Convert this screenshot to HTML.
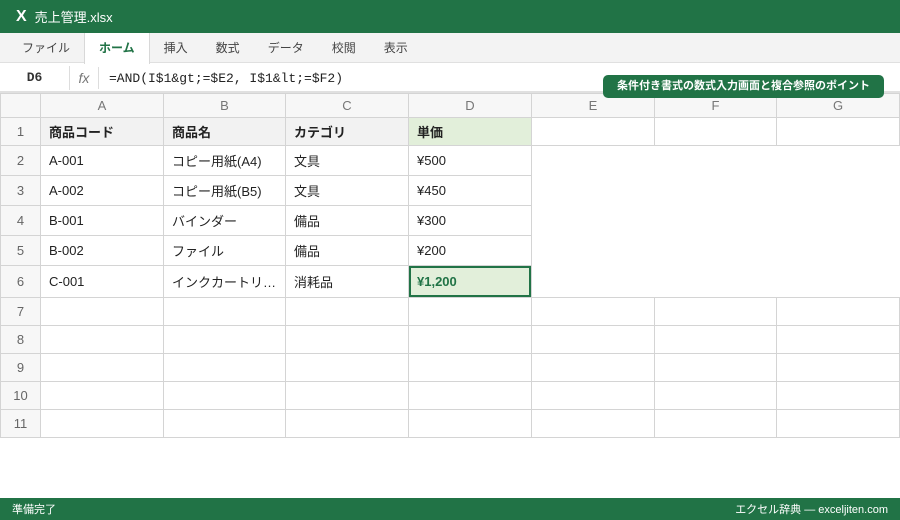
<!DOCTYPE html>
<html><head><meta charset="utf-8"><style>
*{margin:0;padding:0;box-sizing:border-box}
body{width:900px;height:520px;overflow:hidden;background:#fff;font-family:"Liberation Sans","Noto Sans CJK JP",sans-serif;position:relative}
.title{height:33px;background:#217346;color:#fff;display:flex;align-items:center;padding-left:16px;font-size:13px}
.title b{font-size:16px;margin-right:8px}
.tabs{height:30px;background:#f3f3f3;border-bottom:1px solid #e0e0e0;display:flex;padding-left:8px;font-size:12px;color:#444}
.tabs div{padding:0 14px;line-height:30px}
.tabs .on{background:#fff;color:#217346;font-weight:bold;border-left:1px solid #d8d8d8;border-right:1px solid #d8d8d8;height:31px;padding:0 14px}
.fbar{height:30px;display:flex;align-items:center;border-bottom:2px solid #e0e0e0;font-size:13px;padding-top:2px}
.nb{width:70px;text-align:center;font-family:"Liberation Mono",monospace;font-weight:bold;color:#333;border-right:1px solid #ddd;height:24px;line-height:24px}
.fx{width:29px;text-align:center;font-style:italic;color:#777;border-right:1px solid #ddd;height:22px;line-height:22px;font-size:14px}
.fm{font-family:"Liberation Mono",monospace;padding-left:10px;color:#222}
table{position:absolute;left:0;top:93px;border-collapse:collapse;table-layout:fixed;font-size:13px;color:#222}
td{border:1px solid #d4d4d4;padding-left:8px;white-space:nowrap;overflow:hidden}
.h td{background:#f7f7f7;color:#777;text-align:center;padding:0;height:24px;font-weight:normal}
td.rh{background:#f7f7f7;color:#666;text-align:center;padding:0;font-weight:normal}
.r1 td{background:#f2f2f2;font-weight:bold;height:28px}
.r1 td.rh{background:#f7f7f7;font-weight:normal}
.r1 td.d{background:#e2efda}
.r1 td.w{background:#fff}
.m td{height:30px}
.e td{height:28px}
td.sel{background:#e2efda;color:#217346;font-weight:bold;box-shadow:inset 0 0 0 2px #217346}
.badge{position:absolute;left:603px;top:75px;width:281px;height:23px;background:#217346;color:#fff;border-radius:5px;font-size:11px;font-weight:bold;text-align:center;line-height:23px}
.status{position:absolute;left:0;top:498px;width:900px;height:22px;background:#217346;color:#fff;font-size:11px;display:flex;justify-content:space-between;align-items:center;padding:0 12px}
</style></head><body>
<div class="title"><b>X</b>売上管理.xlsx</div>
<div class="tabs"><div>ファイル</div><div class="on">ホーム</div><div>挿入</div><div>数式</div><div>データ</div><div>校閲</div><div>表示</div></div>
<div class="fbar"><div class="nb">D6</div><div class="fx">fx</div><div class="fm">=AND(I$1&amp;gt;=$E2, I$1&amp;lt;=$F2)</div></div>
<table>
<colgroup><col style="width:40px"><col style="width:123px"><col style="width:122px"><col style="width:123px"><col style="width:123px"><col style="width:123px"><col style="width:122px"><col style="width:123px"></colgroup>
<tr class="h"><td></td><td>A</td><td>B</td><td>C</td><td>D</td><td>E</td><td>F</td><td>G</td></tr>
<tr class="r1"><td class="rh">1</td><td>商品コード</td><td>商品名</td><td>カテゴリ</td><td class="d">単価</td><td class="w"></td><td class="w"></td><td class="w"></td></tr>
<tr class="m"><td class="rh">2</td><td>A-001</td><td>コピー用紙(A4)</td><td>文具</td><td>¥500</td><td colspan="3" rowspan="5" style="border:none;border-left:1px solid #d4d4d4"></td></tr>
<tr class="m"><td class="rh">3</td><td>A-002</td><td>コピー用紙(B5)</td><td>文具</td><td>¥450</td></tr>
<tr class="m"><td class="rh">4</td><td>B-001</td><td>バインダー</td><td>備品</td><td>¥300</td></tr>
<tr class="m"><td class="rh">5</td><td>B-002</td><td>ファイル</td><td>備品</td><td>¥200</td></tr>
<tr class="m"><td class="rh" style="height:32px">6</td><td>C-001</td><td>インクカートリ…</td><td>消耗品</td><td class="sel">¥1,200</td></tr>
<tr class="e"><td class="rh">7</td><td></td><td></td><td></td><td></td><td></td><td></td><td></td></tr>
<tr class="e"><td class="rh">8</td><td></td><td></td><td></td><td></td><td></td><td></td><td></td></tr>
<tr class="e"><td class="rh">9</td><td></td><td></td><td></td><td></td><td></td><td></td><td></td></tr>
<tr class="e"><td class="rh">10</td><td></td><td></td><td></td><td></td><td></td><td></td><td></td></tr>
<tr class="e"><td class="rh">11</td><td></td><td></td><td></td><td></td><td></td><td></td><td></td></tr>
</table>
<div class="badge">条件付き書式の数式入力画面と複合参照のポイント</div>
<div class="status"><span>準備完了</span><span>エクセル辞典 — exceljiten.com</span></div>
</body></html>
